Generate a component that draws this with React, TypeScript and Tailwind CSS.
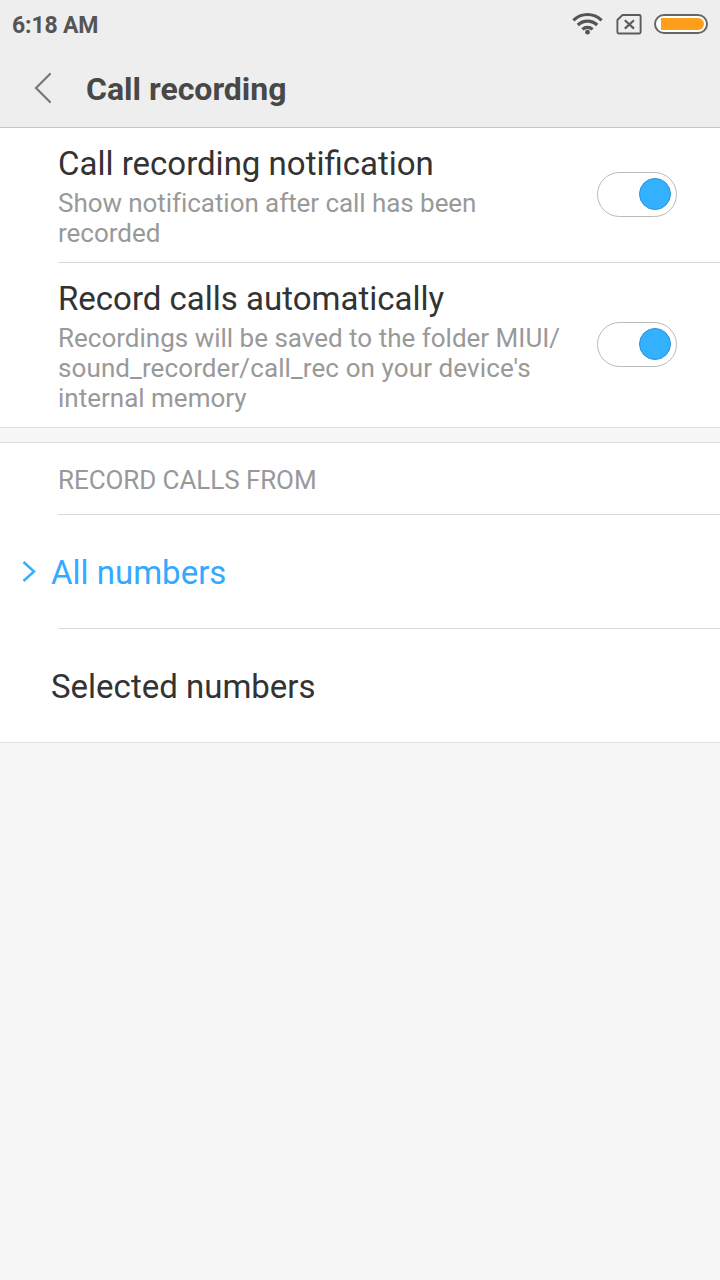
import { useState } from "react";

function StatusIcons() {
  return (
    <div className="flex items-center">
      <svg width="32" height="24" viewBox="0 0 32 24" fill="none" stroke="#555555" strokeWidth="3.2">
        <path d="M1.4 8.4C9.4 0.5 21.6 0.5 29.6 8.4" />
        <path d="M5.8 13C11.2 7.7 19.8 7.7 25.2 13" />
        <path d="M10.4 17.3C13.3 14.6 17.7 14.6 20.6 17.3" />
        <circle cx="15.5" cy="20.2" r="2.4" fill="#555555" stroke="none" />
      </svg>
      <svg
        className="ml-3"
        width="26"
        height="22"
        viewBox="0 0 26 22"
        fill="none"
        stroke="#5c5c5c"
      >
        <path
          d="M6.5 2H23.4Q24.6 2 24.6 3.2V19.3Q24.6 20.5 23.4 20.5H2.6Q1.4 20.5 1.4 19.3V7Z"
          strokeWidth="1.9"
          strokeLinejoin="round"
        />
        <path d="M8.8 7.2L18 15.6M18 7.2L8.8 15.6" strokeWidth="2.2" />
      </svg>
      <div className="ml-3 flex h-5 w-[54px] rounded-full border-2 border-[#666666] bg-white p-0.5">
        <div className="ml-[3px] flex-1 rounded-l-[2px] rounded-r-full bg-[#ff9e1b]" />
      </div>
    </div>
  );
}

function Toggle({ label }: { label: string }) {
  const [on, setOn] = useState(true);

  return (
    <button
      role="switch"
      aria-checked={on}
      aria-label={label}
      onClick={() => setOn(!on)}
      className={`mb-0.5 mr-[43px] flex h-[45px] w-20 shrink-0 items-center rounded-full border border-[#bbbbbb] bg-white px-[5px] pb-px ${
        on ? "justify-end" : "justify-start"
      }`}
    >
      <span
        className={`size-8 rounded-full border ${
          on ? "border-[#2b91da] bg-[#33b1ff]" : "border-[#bbbbbb] bg-white"
        }`}
      />
    </button>
  );
}

function SettingRow({ title, lines }: { title: string; lines: string[] }) {
  return (
    <div className="flex items-center">
      <div className="w-[539px] pb-3.5 pt-4">
        <h2 className="mb-1 text-[33px] leading-10 text-[#333333]">{title}</h2>
        {lines.map((line) => (
          <p
            key={line}
            className={`whitespace-nowrap text-[26px] leading-[30px] text-[#999999] ${
              line.includes("_") ? "tracking-[0.1px]" : line.startsWith("Show") ? "tracking-[-0.06px]" : ""
            }`}
          >
            {line}
          </p>
        ))}
      </div>
      <Toggle label={title} />
    </div>
  );
}

const sources = ["All numbers", "Selected numbers"];

export default function App() {
  const [source, setSource] = useState("All numbers");

  return (
    <main className="h-[1280px] w-[720px] overflow-hidden bg-[#f7f7f7] font-['Roboto',sans-serif]">
      {/* Header */}
      <header className="h-32 border-b border-[#c6c6c6] bg-[#eeeeee]">
        <div className="flex h-12 items-center justify-between px-3">
          <span className="pt-1 text-[23px] font-bold leading-7 tracking-[-0.15px] text-[#555555]">
            6:18 AM
          </span>
          <StatusIcons />
        </div>
        <div className="flex h-20 items-center pl-[33px]">
          <button aria-label="Back">
            <svg
              width="20"
              height="32"
              viewBox="0 0 20 32"
              fill="none"
              stroke="#777777"
              strokeWidth="2.2"
              strokeLinecap="round"
            >
              <path d="M17 2L3 16L17 30" />
            </svg>
          </button>
          <h1 className="ml-[33px] pt-0.5 text-[32px] font-bold leading-10 text-[#484848]">
            Call recording
          </h1>
        </div>
      </header>

      {/* Switches */}
      <section className="border-b border-[#e0e0e0] bg-white pl-[58px]">
        <div className="border-b border-[#d8d8d8]">
          <SettingRow
            title="Call recording notification"
            lines={["Show notification after call has been", "recorded"]}
          />
        </div>
        <SettingRow
          title="Record calls automatically"
          lines={[
            "Recordings will be saved to the folder MIUI/",
            "sound_recorder/call_rec on your device's",
            "internal memory",
          ]}
        />
      </section>

      {/* Record calls from */}
      <section className="mt-3.5 border-y border-[#e0e0e0] bg-white">
        <h3 className="flex h-[71px] items-center pl-[58px] pt-1 text-[26px] tracking-[-0.08px] text-[#999999]">
          RECORD CALLS FROM
        </h3>
        {sources.map((s) => (
          <div key={s}>
            <div className="ml-[58px] h-px bg-[#d8d8d8]" />
            <button
              onClick={() => setSource(s)}
              className={`flex h-[113px] w-full items-center text-left text-[33px] ${
                s === source ? "text-[#33a9ff]" : "text-[#333333]"
              }`}
            >
              <span className="flex w-[51px] pl-[22px]">
                {s === source && (
                  <svg
                    width="14"
                    height="22"
                    viewBox="0 0 14 22"
                    fill="none"
                    stroke="#33b1ff"
                    strokeWidth="2.5"
                  >
                    <path d="M1.5 1L12 10.5L1.5 20" />
                  </svg>
                )}
              </span>
              <span className="pt-0.5">{s}</span>
            </button>
          </div>
        ))}
      </section>
    </main>
  );
}
